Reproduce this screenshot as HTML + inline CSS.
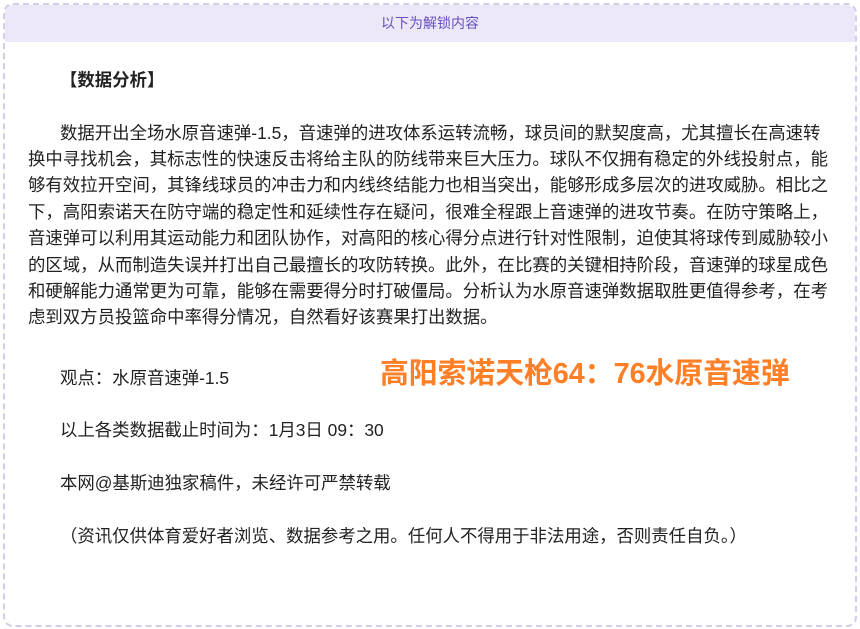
<!DOCTYPE html>
<html><head><meta charset="utf-8"><style>
body{margin:0;width:860px;height:629px;background:#fff;font-family:"Liberation Sans","Noto Sans CJK SC",sans-serif;color:#222;position:relative;overflow:hidden}
.box{position:absolute;left:3px;top:3px;width:850px;height:620px;border:2px dashed #d3cdea;border-radius:10px;overflow:hidden}
.hd{height:37px;background:#ece8f9;color:#6a4fc0;font-size:14px;text-align:center;line-height:37px}
.l{position:absolute;font-size:17.4px;white-space:nowrap;line-height:22px}
.o{position:absolute;left:380px;top:356px;font-size:28.8px;font-weight:bold;color:#ff7f27;white-space:nowrap;line-height:36px}
</style></head><body>
<div class="box"><div class="hd">以下为解锁内容</div></div>
<div class="l" style="left:60px;top:69px;font-weight:bold">【数据分析】</div>
<div class="l" style="left:60px;top:122px">数据开出全场水原音速弹-1.5，音速弹的进攻体系运转流畅，球员间的默契度高，尤其擅长在高速转</div>
<div class="l" style="left:28px;top:148px">换中寻找机会，其标志性的快速反击将给主队的防线带来巨大压力。球队不仅拥有稳定的外线投射点，能</div>
<div class="l" style="left:28px;top:174px">够有效拉开空间，其锋线球员的冲击力和内线终结能力也相当突出，能够形成多层次的进攻威胁。相比之</div>
<div class="l" style="left:28px;top:201px">下，高阳索诺天在防守端的稳定性和延续性存在疑问，很难全程跟上音速弹的进攻节奏。在防守策略上，</div>
<div class="l" style="left:28px;top:227px">音速弹可以利用其运动能力和团队协作，对高阳的核心得分点进行针对性限制，迫使其将球传到威胁较小</div>
<div class="l" style="left:28px;top:254px">的区域，从而制造失误并打出自己最擅长的攻防转换。此外，在比赛的关键相持阶段，音速弹的球星成色</div>
<div class="l" style="left:28px;top:280px">和硬解能力通常更为可靠，能够在需要得分时打破僵局。分析认为水原音速弹数据取胜更值得参考，在考</div>
<div class="l" style="left:28px;top:306px">虑到双方员投篮命中率得分情况，自然看好该赛果打出数据。</div>
<div class="l" style="left:60px;top:367px">观点：水原音速弹-1.5</div>
<div class="o">高阳索诺天枪64：76水原音速弹</div>
<div class="l" style="left:60px;top:419px">以上各类数据截止时间为：1月3日 09：30</div>
<div class="l" style="left:60px;top:472px">本网@基斯迪独家稿件，未经许可严禁转载</div>
<div class="l" style="left:60px;top:525px">（资讯仅供体育爱好者浏览、数据参考之用。任何人不得用于非法用途，否则责任自负。）</div>
</body></html>
